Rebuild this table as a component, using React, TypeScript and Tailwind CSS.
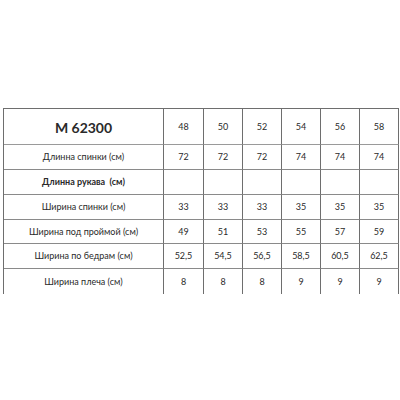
import React from "react";

const cols = ["48", "50", "52", "54", "56", "58"];
const rows: { label: string; bold?: boolean; vals: string[]; h: string; last?: boolean }[] = [
  { label: "Длинна спинки (см)", vals: ["72", "72", "72", "74", "74", "74"], h: "h-[25px]" },
  { label: "Длинна рукава  (см)", bold: true, vals: ["", "", "", "", "", ""], h: "h-[25px]" },
  { label: "Ширина спинки (см)", vals: ["33", "33", "33", "35", "35", "35"], h: "h-[25px]" },
  { label: "Ширина под проймой (см)", vals: ["49", "51", "53", "55", "57", "59"], h: "h-[24px]" },
  { label: "Ширина по бедрам (см)", vals: ["52,5", "54,5", "56,5", "58,5", "60,5", "62,5"], h: "h-[25px]" },
  { label: "Ширина плеча (см)", vals: ["8", "8", "8", "9", "9", "9"], h: "h-[25px]", last: true },
];

export default function App() {
  return (
    <div className="w-[400px] h-[400px] bg-white pt-[108px] pl-[3px]" style={{ fontFamily: "Lato, 'Open Sans', sans-serif" }}>
      <div className="grid grid-cols-[160px_40px_39px_39px_39px_39px_39px] w-[396px] border-l border-t border-[#6e6e6e] text-[#2a2a2a]">
        <div className="h-[36px] border-r border-b border-r-[#6e6e6e] border-b-[#9a9a9a] flex items-center justify-center font-bold text-[14px] pt-[1px]">
          M 62300
        </div>
        {cols.map((c) => (
          <div key={c} className="h-[36px] border-r border-b border-r-[#6e6e6e] border-b-[#9a9a9a] flex items-center justify-center text-[9px]">
            {c}
          </div>
        ))}
        {rows.map((r) => (
          <React.Fragment key={r.label}>
            <div
              className={`${r.h} border-r border-r-[#6e6e6e] ${r.last ? "" : "border-b border-b-[#8a8a8a]"} flex items-center justify-center text-[9px] whitespace-pre ${r.bold ? "font-bold" : ""}`}
            >
              {r.label}
            </div>
            {r.vals.map((v, i) => (
              <div
                key={i}
                className={`${r.h} border-r border-r-[#6e6e6e] ${r.last ? "" : "border-b border-b-[#8a8a8a]"} flex items-center justify-center text-[9px]`}
              >
                {v}
              </div>
            ))}
          </React.Fragment>
        ))}
      </div>
    </div>
  );
}
